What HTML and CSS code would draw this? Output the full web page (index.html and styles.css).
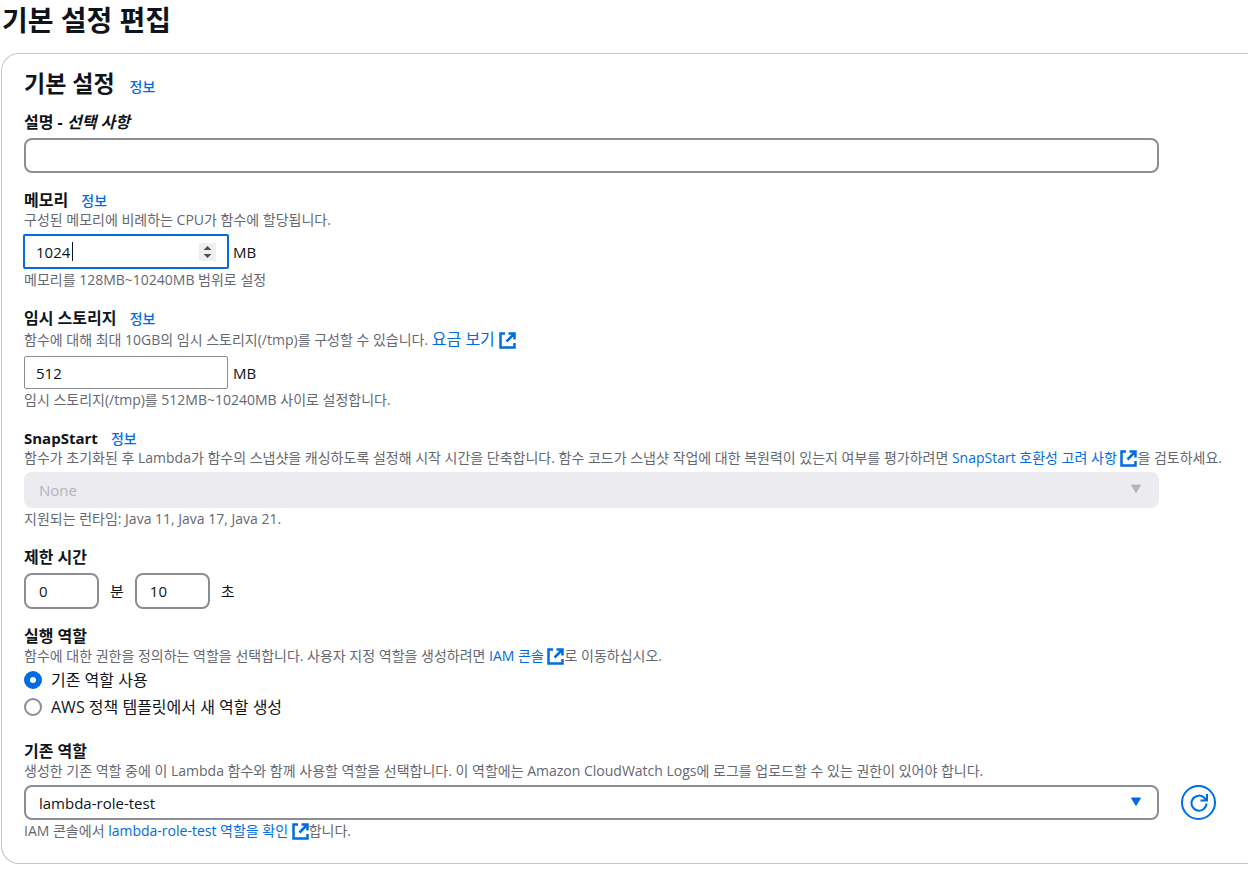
FILE: index.html
```
<!DOCTYPE html>
<html lang="ko">
<head>
  <meta charset="UTF-8">
  <meta name="viewport" content="width=device-width, initial-scale=1.0">
  <title>기본 설정 편집</title>
  <link rel="stylesheet" href="styles.css">
</head>
<body>
  <svg class="sprite" aria-hidden="true">
    <symbol id="external" viewBox="0 0 17 17">
      <path d="M6 1.500H1.500v14h14V11M9.500 1.500h6v6M15 2L7.500 9.500" fill="none" stroke="currentColor" stroke-width="2.500"/>
    </symbol>
    <symbol id="caret" viewBox="0 0 12 10">
      <path d="M1.500 1h9L6 8.500z" fill="currentColor" stroke="currentColor" stroke-width="1" stroke-linejoin="round"/>
    </symbol>
  </svg>

  <h1>기본 설정 편집</h1>
  <form class="panel">
    <h2>기본 설정 <a class="info" href="#">정보</a></h2>

    <div class="field">
      <label class="title" for="desc">설명 - <em>선택 사항</em></label>
      <div class="row">
        <input class="box" type="text" id="desc">
      </div>
    </div>

    <div class="field">
      <div class="title"><label for="memory">메모리</label> <a class="info" href="#">정보</a></div>
      <p class="text">구성된 메모리에 비례하는 CPU가 함수에 할당됩니다.</p>
      <div class="size">
        <div class="number focused">
          <input type="text" inputmode="numeric" id="memory" value="1024">
          <i class="cursor"></i>
          <svg class="spinner" viewBox="0 0 17 18"><path d="M4.500 7L8.500 3l4 4zM4.500 11l4 4 4-4z" fill="#505050"/></svg>
        </div>
        <span>MB</span>
      </div>
      <p class="text hint">메모리를 128MB~10240MB 범위로 설정</p>
    </div>

    <div class="field">
      <div class="title"><label for="storage">임시 스토리지</label> <a class="info" href="#">정보</a></div>
      <p class="text tall">함수에 대해 최대 10GB의 임시 스토리지(/tmp)를 구성할 수 있습니다. <a class="price" href="#">요금 보기 <svg class="ext"><use href="#external"/></svg></a></p>
      <div class="size">
        <div class="number">
          <input type="text" inputmode="numeric" id="storage" value="512">
        </div>
        <span>MB</span>
      </div>
      <p class="text hint">임시 스토리지(/tmp)를 512MB~10240MB 사이로 설정합니다.</p>
    </div>

    <div class="field">
      <div class="title"><label class="latin" for="snap">SnapStart</label> <a class="info" href="#">정보</a></div>
      <p class="text">함수가 초기화된 후 Lambda가 함수의 스냅샷을 캐싱하도록 설정해 시작 시간을 단축합니다. 함수 코드가 스냅샷 작업에 대한 복원력이 있는지 여부를 평가하려면 <a href="#">SnapStart 호환성 고려 사항 <svg class="ext"><use href="#external"/></svg></a>을 검토하세요.</p>
      <div class="row">
        <div class="select">
          <select class="box" id="snap" disabled><option>None</option></select>
          <svg class="caret off"><use href="#caret"/></svg>
        </div>
      </div>
      <p class="text hint">지원되는 런타임: Java 11, Java 17, Java 21.</p>
    </div>

    <fieldset class="field">
      <legend class="title">제한 시간</legend>
      <div class="time">
        <input class="box" type="text" inputmode="numeric" id="min" value="0">
        <label for="min">분</label>
        <input class="box" type="text" inputmode="numeric" id="sec" value="10">
        <label for="sec">초</label>
      </div>
    </fieldset>

    <fieldset class="field roles">
      <legend class="title">실행 역할</legend>
      <p class="text">함수에 대한 권한을 정의하는 역할을 선택합니다. 사용자 지정 역할을 생성하려면 <a href="#">IAM 콘솔 <svg class="ext"><use href="#external"/></svg></a>로 이동하십시오.</p>
      <div class="radios">
        <label><input type="radio" name="role" checked>기존 역할 사용</label>
        <label><input type="radio" name="role">AWS 정책 템플릿에서 새 역할 생성</label>
      </div>
    </fieldset>

    <div class="field">
      <label class="title" for="role">기존 역할</label>
      <p class="text">생성한 기존 역할 중에 이 Lambda 함수와 함께 사용할 역할을 선택합니다. 이 역할에는 Amazon CloudWatch Logs에 로그를 업로드할 수 있는 권한이 있어야 합니다.</p>
      <div class="row">
        <div class="select">
          <select class="box" id="role"><option>lambda-role-test</option></select>
          <svg class="caret"><use href="#caret"/></svg>
        </div>
        <button class="refresh" type="button" aria-label="새로 고침">
          <svg viewBox="0 0 18 18"><path d="M16.500 9.500A7.500 7.500 0 1 1 14.500 4L16 6M17 0v6.500h-6.500" fill="none" stroke="currentColor" stroke-width="2"/></svg>
        </button>
      </div>
      <p class="text hint">IAM 콘솔에서 <a href="#">lambda-role-test 역할을 확인 <svg class="ext"><use href="#external"/></svg></a>합니다.</p>
    </div>
  </form>
</body>
</html>
```
FILE: styles.css
```
* {
  box-sizing: border-box;
}
body {
  margin: 0;
  font-family: "Open Sans", "Noto Sans CJK KR", sans-serif;
  font-size: 15px;
  line-height: 20px;
  color: #0f141a;
  background: #fff;
  overflow-x: hidden;
}
.sprite {
  position: absolute;
  width: 0;
  height: 0;
}
h1 {
  margin: 0 0 13px 2px;
  font-size: 28px;
  line-height: 40px;
}
a {
  color: #006ce0;
  text-decoration: none;
}
a:hover {
  text-decoration: underline;
}

/* panel runs past the right edge of the window */
.panel {
  display: flex;
  flex-direction: column;
  gap: 17px;
  margin-left: 1px;
  padding: 14px 32px 21px 22px;
  border: 1px solid #c6c6cd;
  border-right: none;
  border-radius: 18px 0 0 18px;
}
h2 {
  margin: 0 0 -3px;
  font-size: 23px;
  line-height: 30px;
}
.info {
  margin-left: 9px;
  font-size: 14px;
  line-height: 1;
  font-weight: 500;
}
.field {
  min-width: 0;
  margin: 0;
  padding: 0;
  border: none;
}
.title {
  display: block;
  padding: 0;
  font-size: 16px;
  font-weight: 700;
}
.latin {
  font-size: 15px;
  line-height: 1;
}
.text {
  margin: 0;
  font-size: 14px;
  color: #656871;
  white-space: nowrap;
}
.tall {
  line-height: 24px;
}
.hint {
  line-height: 22px;
}
.price {
  font-size: 16px;
  line-height: 1;
}
.ext {
  width: 17px;
  height: 17px;
  vertical-align: -4px;
}

/* controls */
input,
select {
  font: inherit;
  color: inherit;
}
.row {
  display: grid;
  grid-template-columns: 1fr 35px;
  gap: 22px;
  margin-top: 4px;
}
.title + .row,
.title + .time {
  margin-top: 6px;
}
.box {
  width: 100%;
  height: 35px;
  padding: 0 13px;
  border: 2px solid #8c8c94;
  border-radius: 8px;
  background: #fff;
}
.select {
  position: relative;
}
.select .box {
  display: block;
  appearance: none;
}
.select .box:disabled {
  height: 36px;
  border-color: #ebebf0;
  background: #ebebf0;
  color: #b4b4bb;
  opacity: 1;
}
.caret {
  position: absolute;
  top: 12px;
  right: 17px;
  width: 12px;
  height: 10px;
  color: #006ce0;
  pointer-events: none;
}
.off {
  color: #b4b4bb;
}
.size {
  display: flex;
  align-items: center;
  gap: 5px;
  margin-top: 4px;
}
.number {
  position: relative;
  display: flex;
  align-items: center;
  width: 204px;
  height: 33px;
  padding: 0 11px;
  border: 1px solid #8c8c94;
  border-radius: 2px;
}
.number input {
  flex: 1;
  min-width: 0;
  padding: 0;
  border: none;
  outline: none;
}
.focused {
  width: 206px;
  height: 35px;
  margin-left: -1px;
  border: 2px solid #006ce0;
}
.focused + span {
  margin-left: -1px;
}
.cursor {
  position: absolute;
  top: 6px;
  left: 47px;
  width: 1px;
  height: 19px;
  background: #0f141a;
}
.spinner {
  width: 17px;
  height: 18px;
  background: #efefef;
}
.time {
  display: flex;
  align-items: center;
  gap: 11px;
}
.time .box {
  width: 75px;
  height: 36px;
}
.radios {
  display: flex;
  flex-direction: column;
  gap: 7px;
  margin-top: 4px;
}
.radios label {
  display: flex;
  align-items: center;
  font-size: 16px;
}
.radios input {
  appearance: none;
  width: 18px;
  height: 18px;
  margin: 0 9px 0 0;
  border: 2px solid #8c8c94;
  border-radius: 50%;
}
.radios input:checked {
  border: 6px solid #006ce0;
}
.roles {
  margin-bottom: 7px;
}
.refresh {
  display: flex;
  align-items: center;
  justify-content: center;
  width: 35px;
  height: 35px;
  padding: 0;
  border: 2px solid #006ce0;
  border-radius: 50%;
  background: #fff;
  color: #006ce0;
}
.refresh svg {
  width: 18px;
  height: 18px;
}
```
